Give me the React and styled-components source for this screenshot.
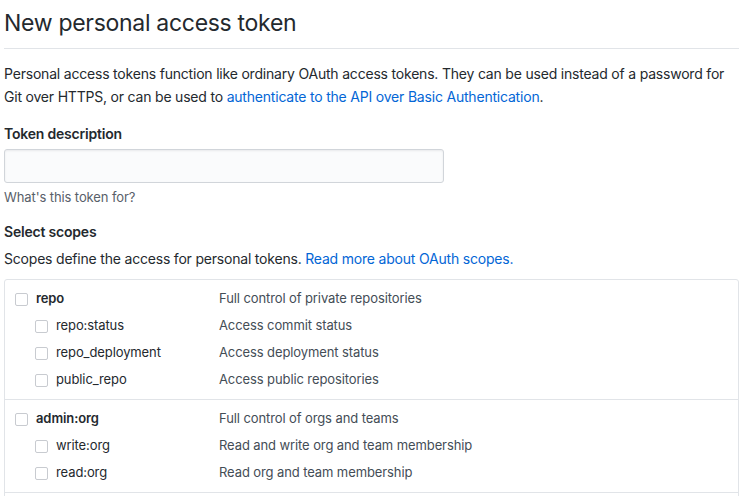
import React from "react";
import styled, { createGlobalStyle } from "styled-components";

const GlobalStyle = createGlobalStyle`
  body {
    margin: 0;
    background: #fff;
    color: #24292e;
    font-family: Inter, "Liberation Sans", sans-serif;
    font-size: 14px;
    line-height: 1.5;
    letter-spacing: -0.2px;
  }
`;

const Page = styled.div`
  padding: 0 4px;
`;

const Header = styled.h1`
  margin: 0;
  padding: 8px 0 10px;
  font-size: 23px;
  font-weight: 400;
  line-height: 30px;
  letter-spacing: -0.3px;
  border-bottom: 1px solid #e1e4e8;
`;

const Intro = styled.p`
  margin: 13px 0 0;
  line-height: 23px;
`;

const Link = styled.a`
  color: #0366d6;
  text-decoration: none;
`;

const Label = styled.div`
  margin-top: ${(p) => p.$top || 0}px;
  font-weight: 600;
`;

const Input = styled.input`
  display: block;
  box-sizing: border-box;
  width: 440px;
  height: 34px;
  margin-top: 5px;
  background: #fafbfc;
  border: 1px solid #d1d5da;
  border-radius: 3px;
  box-shadow: inset 0 1px 2px rgba(27, 31, 35, 0.075);
`;

const Note = styled.div`
  margin-top: 5px;
  font-size: 13px;
  letter-spacing: -0.1px;
  color: #586069;
`;

const Hint = styled.p`
  margin: 6px 0 0;
`;

const Scopes = styled.div`
  margin-top: 10px;
  border: 1px solid #e1e4e8;
  border-radius: 3px;
  font-size: 13px;
  letter-spacing: -0.1px;
`;

const Group = styled.div`
  padding: 6px 0 5px;
  & + & {
    border-top: 1px solid #e1e4e8;
  }
`;

const Row = styled.div`
  display: grid;
  grid-template-columns: 214px 1fr;
  height: 27px;
  align-items: center;
`;

const Name = styled.label`
  display: flex;
  align-items: center;
  gap: 8px;
  padding-left: ${(p) => (p.$sub ? 30 : 10)}px;
  font-weight: ${(p) => (p.$sub ? 400 : 600)};
`;

const Box = styled.span`
  width: 11px;
  height: 11px;
  border: 1px solid #c8cbd0;
  border-radius: 2px;
  background: #fff;
`;

const Desc = styled.span`
  color: #444d56;
`;

const groups = [
  [
    ["repo", "Full control of private repositories"],
    ["repo:status", "Access commit status"],
    ["repo_deployment", "Access deployment status"],
    ["public_repo", "Access public repositories"],
  ],
  [
    ["admin:org", "Full control of orgs and teams"],
    ["write:org", "Read and write org and team membership"],
    ["read:org", "Read org and team membership"],
  ],
  [["admin:public_key", "Full control of user public keys"]],
];

export default function App() {
  return (
    <Page>
      <GlobalStyle />
      <Header>New personal access token</Header>
      <Intro>
        Personal access tokens function like ordinary OAuth access tokens. They
        can be used instead of a password for Git over HTTPS, or can be used to{" "}
        <Link href="#">authenticate to the API over Basic Authentication</Link>.
      </Intro>
      <Label $top={15}>Token description</Label>
      <Input type="text" />
      <Note>What's this token for?</Note>
      <Label $top={13}>Select scopes</Label>
      <Hint>
        Scopes define the access for personal tokens.{" "}
        <Link href="#">Read more about OAuth scopes.</Link>
      </Hint>
      <Scopes>
        {groups.map((rows, gi) => (
          <Group key={gi}>
            {rows.map(([name, desc], i) => (
              <Row key={name}>
                <Name $sub={i > 0}>
                  <Box />
                  {name}
                </Name>
                <Desc>{desc}</Desc>
              </Row>
            ))}
          </Group>
        ))}
      </Scopes>
    </Page>
  );
}
